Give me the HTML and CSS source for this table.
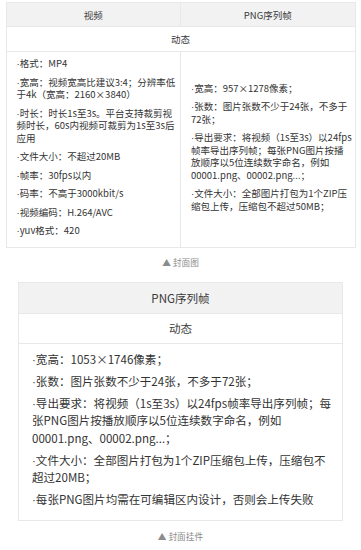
FILE: index.html
```html
<!DOCTYPE html>
<html lang="zh-CN">
<head>
<meta charset="utf-8">
<title>规格说明</title>
<link rel="stylesheet" href="styles.css">
</head>
<body>
<div class="doc">
  <table class="spec spec--pair">
    <thead>
      <tr><th>视频</th><th>PNG序列帧</th></tr>
    </thead>
    <tbody>
      <tr class="spec-sub"><td colspan="2">动态</td></tr>
      <tr class="spec-body">
        <td>
          <p><span class="dot">·</span>格式：MP4</p>
          <p><span class="dot">·</span>宽高：视频宽高比建议3:4；分辨率低于4k（宽高：2160×3840）</p>
          <p><span class="dot">·</span>时长：时长1s至3s。平台支持裁剪视频时长，60s内视频可裁剪为1s至3s后应用</p>
          <p><span class="dot">·</span>文件大小：不超过20MB</p>
          <p><span class="dot">·</span>帧率：30fps以内</p>
          <p><span class="dot">·</span>码率：不高于3000kbit/s</p>
          <p><span class="dot">·</span>视频编码：H.264/AVC</p>
          <p><span class="dot">·</span>yuv格式：420</p>
        </td>
        <td>
          <p><span class="dot">·</span>宽高：957×1278像素；</p>
          <p><span class="dot">·</span>张数：图片张数不少于24张，不多于72张；</p>
          <p><span class="dot">·</span>导出要求：将视频（1s至3s）以24fps帧率导出序列帧；每张PNG图片按播放顺序以5位连续数字命名，例如00001.png、00002.png...；</p>
          <p><span class="dot">·</span>文件大小：全部图片打包为1个ZIP压缩包上传，压缩包不超过50MB；</p>
        </td>
      </tr>
    </tbody>
  </table>
  <p class="caption">▲ 封面图</p>

  <table class="spec spec--single">
    <thead>
      <tr><th>PNG序列帧</th></tr>
    </thead>
    <tbody>
      <tr class="spec-sub"><td>动态</td></tr>
      <tr class="spec-body">
        <td>
          <p><span class="dot">·</span>宽高：1053×1746像素；</p>
          <p><span class="dot">·</span>张数：图片张数不少于24张，不多于72张；</p>
          <p><span class="dot">·</span>导出要求：将视频（1s至3s）以24fps帧率导出序列帧；每张PNG图片按播放顺序以5位连续数字命名，例如00001.png、00002.png...；</p>
          <p><span class="dot">·</span>文件大小：全部图片打包为1个ZIP压缩包上传，压缩包不超过20MB；</p>
          <p><span class="dot">·</span>每张PNG图片均需在可编辑区内设计，否则会上传失败</p>
        </td>
      </tr>
    </tbody>
  </table>
  <p class="caption caption--last">▲ 封面挂件</p>
</div>
</body>
</html>
```

FILE: styles.css
```css
html, body {
  margin: 0;
  padding: 0;
  background: #ffffff;
}

body {
  font-family: "Noto Sans CJK SC", "Noto Sans", sans-serif;
  color: #333333;
}

.doc {
  padding-top: 2px;
}

.spec {
  border-collapse: collapse;
  table-layout: fixed;
  margin: 0 auto;
}

.spec th,
.spec td {
  border: 1px solid #e8e8e8;
  padding: 0;
}

.spec thead th {
  background: #f2f2f2;
  font-weight: 400;
  text-align: center;
  color: #3a3a3a;
}

.spec-sub td {
  text-align: center;
  color: #3a3a3a;
}

.spec-body td {
  vertical-align: middle;
  text-align: left;
}

.spec p {
  margin: 0;
}

.dot {
  font-family: "Liberation Sans", sans-serif;
  line-height: 1;
}

/* two-column table (cover image) */
.spec--pair {
  width: 350px;
  font-size: 9.5px;
}

.spec--pair thead th {
  height: 23px;
}

.spec--pair .spec-sub td {
  height: 24px;
}

.spec--pair .spec-body td {
  padding: 5px 2px 10px 10px;
  line-height: 12.5px;
}

.spec--pair .spec-body p + p {
  margin-top: 6px;
}

/* single-column table (cover widget) */
.spec--single {
  width: 325px;
  font-size: 11.55px;
}

.spec--single thead th {
  height: 30px;
}

.spec--single .spec-sub td {
  height: 29px;
}

.spec--single .spec-body td {
  padding: 7px 6px 11px 13px;
  line-height: 17.5px;
}

.spec--single .spec-body p + p {
  margin-top: 4.5px;
}

.caption {
  margin: 9px 0 13px;
  text-align: center;
  font-size: 8.7px;
  line-height: 12px;
  color: #8c8c8c;
}

.caption--last {
  margin: 10px 0 0;
}
```
